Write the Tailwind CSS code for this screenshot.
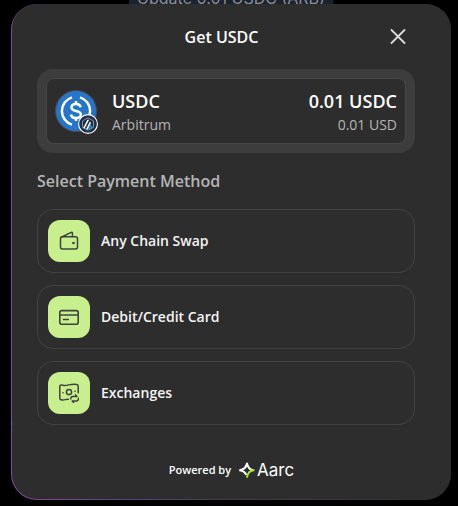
<!DOCTYPE html>
<html lang="en">
<head>
<meta charset="utf-8">
<meta name="viewport" content="width=device-width, initial-scale=1">
<title>Get USDC</title>
<script src="https://cdn.jsdelivr.net/npm/@tailwindcss/browser@4"></script>
</head>
<body class="relative min-h-screen overflow-hidden bg-black pt-1 pr-[7px] pb-1.5 pl-[11px] font-['Open_Sans',sans-serif] text-white">
  <div class="absolute inset-x-0 top-0 flex justify-center pl-1">
    <div class="-mt-3.5 h-6 w-[204px] bg-[#1b2230] text-center font-['Inter',sans-serif] text-base leading-6 whitespace-nowrap text-[#8b8d92]">Update 0.01 USDC (ARB)</div>
  </div>
  <main role="dialog" aria-labelledby="title" class="relative rounded-[26px] bg-linear-to-r from-[#7d4a9c] via-[#4a3a50] to-[#2d2d2d] pb-px pl-px">
    <div class="rounded-[25px] bg-[#2d2d2d] pt-[21px] pr-9 pb-5 pl-[25px]">
      <header class="mr-[9px] grid grid-cols-[16px_1fr_16px] items-center">
        <h1 id="title" class="col-start-2 text-center text-base leading-6 font-semibold">Get USDC</h1>
        <button type="button" aria-label="Close" class="size-4 text-[#dcdcdc]">
          <svg viewBox="0 0 16 16" class="size-4" fill="none" stroke="currentColor" stroke-width="1.800" stroke-linecap="round"><path d="M1.500 1l13 13M14.500 1l-13 13"/></svg>
        </button>
      </header>

      <section class="mt-5 rounded-2xl bg-[#3d3d3d] p-[9px]">
        <div class="flex h-[66px] items-center rounded-lg border border-[#484848] bg-[#2d2d2d] px-2">
          <div class="relative size-[42px]">
            <svg viewBox="0 0 42 42" class="size-[42px]" fill="none" aria-hidden="true">
              <circle cx="21" cy="21" r="20.500" fill="#2775ca" stroke="#4a4a4a"/>
              <path d="M17 7.400a14.200 14.200 0 0 0 0 27.200M25 7.400a14.200 14.200 0 0 1 0 27.200" stroke="#fff" stroke-width="2.500"/>
              <path d="M25.600 17.200c-.4-2-2-3.200-4.600-3.200-2.700 0-4.500 1.300-4.500 3.400 0 4.900 9.400 2.300 9.400 7.200 0 2.200-1.900 3.500-4.900 3.500-2.900 0-4.700-1.300-5-3.600M21 11v3M21 28v3" stroke="#fff" stroke-width="2.500"/>
            </svg>
            <svg viewBox="0 0 20 20" class="absolute top-6 left-[23px] size-5" fill="none" aria-hidden="true">
              <circle cx="10" cy="10" r="9.400" fill="#213147" stroke="#fff" stroke-width="1.100"/>
              <path d="M10 3.800l5.500 3.100v6.300L10 16.300l-5.500-3.100V6.900z" stroke="#8fa9be" stroke-width=".8"/>
              <path d="M5.200 14l4.200-8.200h1.700l-4.600 9zM8 15.300l4-7.900.9 1.700-3.100 6.400z" fill="#fff"/>
              <path d="M12.300 10.200l2.300 3.500-1.300.9-1.700-2.800zM11.300 12.600l1.400 2.300-1.600.9-.7-1.300z" fill="#28a0f0"/>
            </svg>
          </div>
          <div class="ml-[15px] pt-[3px]">
            <p class="text-lg leading-6 font-semibold">USDC</p>
            <p class="text-sm leading-6 text-[#b5b5b5]">Arbitrum</p>
          </div>
          <div class="ml-auto pt-[3px] text-right">
            <p class="text-lg leading-6 font-semibold">0.01 USDC</p>
            <p class="text-sm leading-6 text-[#b5b5b5]">0.01 USD</p>
          </div>
        </div>
      </section>

      <h2 class="mt-4 text-base leading-6 font-semibold text-[#b5b5b5]">Select Payment Method</h2>

      <div class="mt-4 flex flex-col gap-3">
        <button type="button" class="flex h-16 items-center gap-[11px] rounded-2xl border border-[#424242] px-2.5 text-sm font-semibold text-[#f5f5f5]">
          <span class="flex size-[42px] items-center justify-center rounded-xl bg-[#c8ef8e] text-[#414141]">
            <svg viewBox="0 0 20 20" class="size-5" fill="none" stroke="currentColor" stroke-width="1.500" stroke-linecap="round" stroke-linejoin="round" aria-hidden="true"><rect x="1.500" y="5.700" width="17" height="12.300" rx="2"/><path d="M2.200 6.200L12.200 1.400c.6-.3 1.200.1 1.200.8v3.200"/><circle cx="14.500" cy="12" r=".6" fill="currentColor"/></svg>
          </span>
          Any Chain Swap
        </button>
        <button type="button" class="flex h-16 items-center gap-[11px] rounded-2xl border border-[#424242] px-2.5 text-sm font-semibold text-[#f5f5f5]">
          <span class="flex size-[42px] items-center justify-center rounded-xl bg-[#c8ef8e] text-[#414141]">
            <svg viewBox="0 0 20 20" class="size-5" fill="none" stroke="currentColor" stroke-width="1.600" stroke-linecap="round" stroke-linejoin="round" aria-hidden="true"><rect x=".8" y="3.600" width="18.400" height="13.600" rx="2"/><path d="M1 8h18M4.500 12.500h4.800"/></svg>
          </span>
          Debit/Credit Card
        </button>
        <button type="button" class="flex h-16 items-center gap-[11px] rounded-2xl border border-[#424242] px-2.5 text-sm font-semibold text-[#f5f5f5]">
          <span class="flex size-[42px] items-center justify-center rounded-xl bg-[#c8ef8e] text-[#414141]">
            <svg viewBox="0 0 20 20" class="size-5" fill="none" stroke="currentColor" stroke-width="1.500" stroke-linecap="round" stroke-linejoin="round" aria-hidden="true"><path d="M9.400 16.300c-2.400-.3-4.400 1.300-7.400.5-.8-.2-1.200-.7-1.200-1.500V3.300c0-.9.700-1.400 1.600-1.200 5.600 1.400 9.300-1.800 15.400-.5.900.2 1.400.7 1.400 1.600v6.500"/><circle cx="10" cy="9" r="2.600"/><path d="M4 9.800h.1M16 8.200h.1M11.800 16c0-1.700.8-2.600 2-2.600h4.200l-1.400-1.500M19.500 15.200c0 1.800-.8 2.800-2 2.800h-4.300l1.400 1.500"/></svg>
          </span>
          Exchanges
        </button>
      </div>
    </div>
    <footer class="-mt-5 flex items-center justify-center gap-2 rounded-b-[25px] bg-[#2d2d2d] pt-[33px] pb-[17px]">
      <span class="text-[11px] leading-6 font-semibold">Powered by</span>
      <span class="flex items-center gap-0.5">
        <svg viewBox="0 0 16 16" class="size-4" fill="none" aria-hidden="true">
          <path d="M.5 8.200C4.500 7.600 7.300 5.600 8 1.500c.7 3.700 2.500 5.800 6 6.700" stroke="#fff" stroke-width="2" stroke-linejoin="round"/>
          <path d="M.5 8.200c3.600.5 5.700 2 6.700 4.800" stroke="#fff" stroke-width="2"/>
          <path d="M15.500 8.100c-4.700.5-7.100 3-7.500 7.600" stroke="#a5e82e" stroke-width="2"/>
        </svg>
        <span class="font-['Inter',sans-serif] text-[17px] leading-6">Aarc</span>
      </span>
    </footer>
  </main>
</body>
</html>
